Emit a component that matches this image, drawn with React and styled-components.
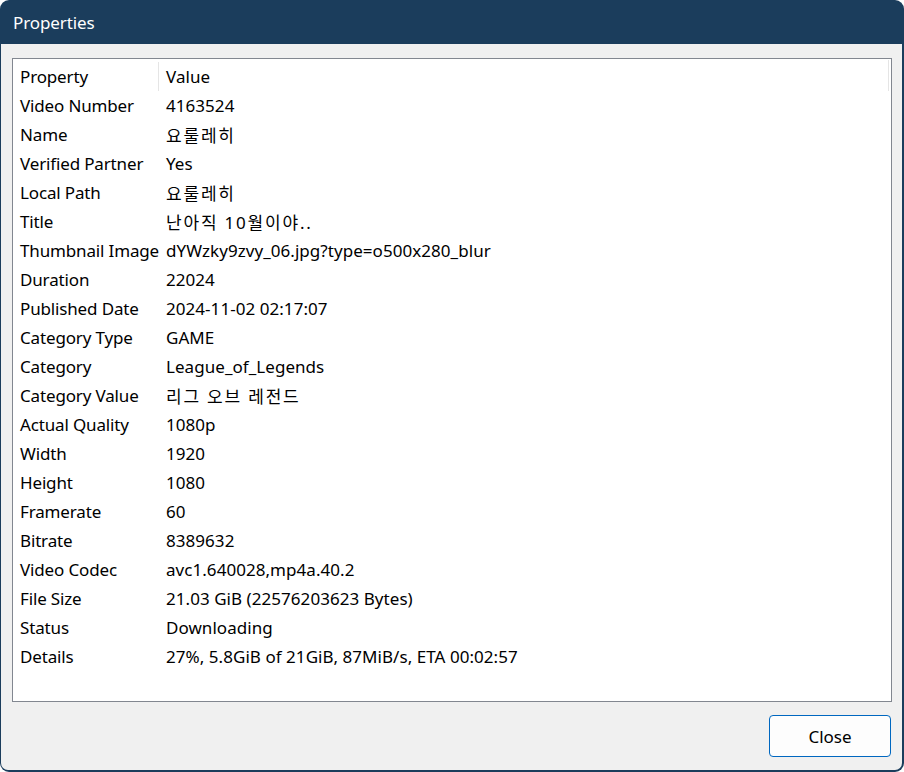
import React from "react";
import styled, { createGlobalStyle } from "styled-components";

const Global = createGlobalStyle`
  html, body { margin: 0; padding: 0; background: #ffffff; }
  body { font-family: "Noto Sans", "Noto Sans CJK KR", sans-serif; }
`;

const Window = styled.div`
  width: 904px;
  height: 772px;
  box-sizing: border-box;
  background: #1b3d5c;
  border-radius: 9px;
  display: flex;
  flex-direction: column;
  overflow: hidden;
  padding: 0 2px 2px 1px;
`;

const TitleBar = styled.div`
  height: 44px;
  flex: none;
  display: flex;
  align-items: center;
  padding: 1px 0 0 12px;
  box-sizing: border-box;
  color: #ffffff;
  font-size: 17px;
  letter-spacing: -0.1px;
`;

const Body = styled.div`
  flex: 1;
  background: #f0f0f0;
  border-radius: 0 0 7px 7px;
  display: flex;
  flex-direction: column;
  padding: 14px 10px 13px 11px;
  min-height: 0;
`;

const ListBox = styled.div`
  height: 644px;
  box-sizing: border-box;
  border: 1px solid #828790;
  background: #ffffff;
  padding-top: 3px;
  position: relative;
`;

const Row = styled.div`
  display: grid;
  grid-template-columns: 146px 1fr;
  height: 29px;
  align-items: center;
  font-size: 17px;
  color: #000000;
  font-family: "Noto Sans", "Noto Sans CJK KR", sans-serif;
`;

const Cell = styled.div`
  padding-left: 7px;
  white-space: nowrap;
  height: 100%;
  display: flex;
  align-items: center;
  box-sizing: border-box;
  letter-spacing: ${(p) => (p.$hangul ? "1.8px" : p.$key ? "-0.15px" : "0.05px")};
  border-right: ${(p) => (p.$sep ? "1px solid #e5e5e5" : "none")};
`;

const HeaderRow = styled(Row)`
  margin-right: 2px;
  position: relative;
`;

const HeaderEnd = styled.div`
  position: absolute;
  right: 0;
  top: -2px;
  bottom: 0;
  width: 1px;
  background: #e5e5e5;
`;

const Footer = styled.div`
  flex: 1;
  display: flex;
  justify-content: flex-end;
  align-items: flex-end;
`;

const Button = styled.button`
  width: 122px;
  height: 42px;
  box-sizing: border-box;
  border: 1px solid #0067c0;
  border-radius: 4px;
  background: #fdfdfd;
  font-family: "Noto Sans", sans-serif;
  font-size: 17px;
  color: #000000;
  padding: 0;
  margin-right: 1px;
`;

const rows = [
  ["Video Number", "4163524"],
  ["Name", "요룰레히"],
  ["Verified Partner", "Yes"],
  ["Local Path", "요룰레히"],
  ["Title", "난아직 10월이야.."],
  ["Thumbnail Image", "dYWzky9zvy_06.jpg?type=o500x280_blur"],
  ["Duration", "22024"],
  ["Published Date", "2024-11-02 02:17:07"],
  ["Category Type", "GAME"],
  ["Category", "League_of_Legends"],
  ["Category Value", "리그 오브 레전드"],
  ["Actual Quality", "1080p"],
  ["Width", "1920"],
  ["Height", "1080"],
  ["Framerate", "60"],
  ["Bitrate", "8389632"],
  ["Video Codec", "avc1.640028,mp4a.40.2"],
  ["File Size", "21.03 GiB (22576203623 Bytes)"],
  ["Status", "Downloading"],
  ["Details", "27%, 5.8GiB of 21GiB, 87MiB/s, ETA 00:02:57"],
];

const hasHangul = (s) => /[\uac00-\ud7a3]/.test(s);

export default function App() {
  return (
    <>
      <Global />
      <Window>
        <TitleBar>Properties</TitleBar>
        <Body>
          <ListBox>
            <HeaderRow>
              <Cell $sep $key>Property</Cell>
              <Cell>Value</Cell>
              <HeaderEnd />
            </HeaderRow>
            {rows.map(([k, v]) => (
              <Row key={k}>
                <Cell $key>{k}</Cell>
                <Cell $hangul={hasHangul(v)}>{v}</Cell>
              </Row>
            ))}
          </ListBox>
          <Footer>
            <Button>Close</Button>
          </Footer>
        </Body>
      </Window>
    </>
  );
}
